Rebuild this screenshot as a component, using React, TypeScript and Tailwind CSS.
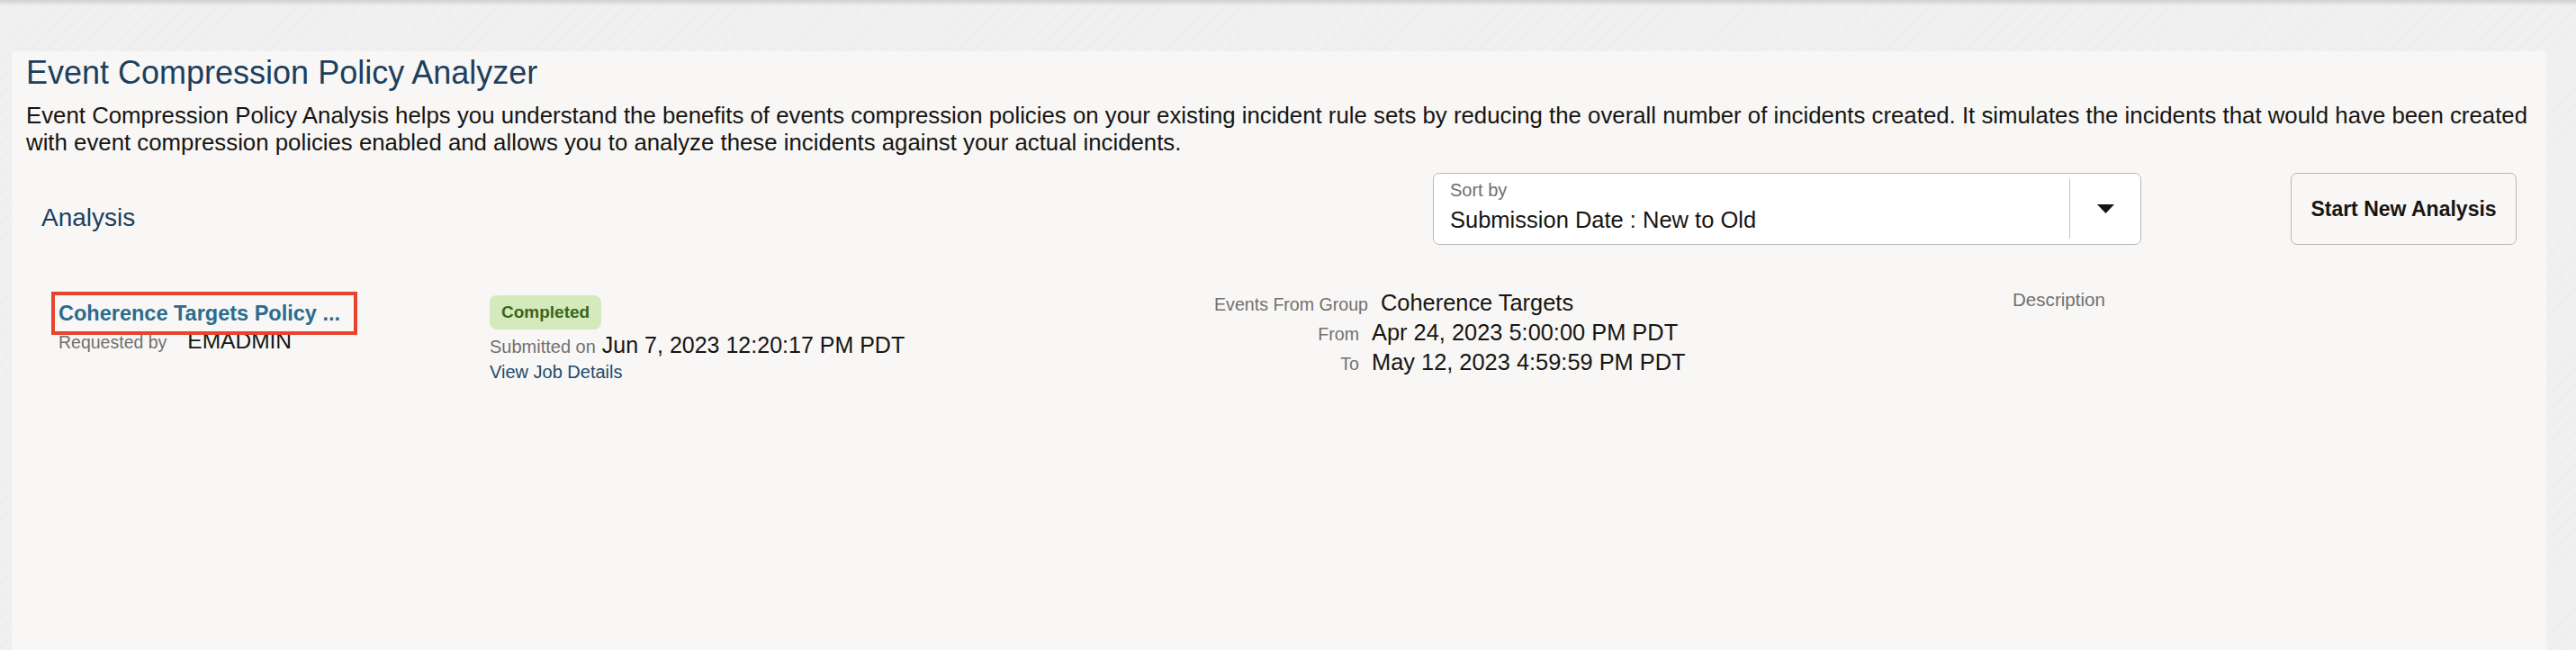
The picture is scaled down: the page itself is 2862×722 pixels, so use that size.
function SortArrow() {
  return (
    <svg width="19" height="10" viewBox="0 0 19 10" aria-hidden="true">
      <polygon points="0,0 19,0 9.5,10" fill="#161513" />
    </svg>
  )
}

function DetailRow({ label, value, labelWidth }: { label: string; value: string; labelWidth: string }) {
  return (
    <div className="flex items-baseline leading-[31px]">
      <span className={`${labelWidth} shrink-0 text-right text-[19.6px] text-[#707070]`}>{label}</span>
      <span className="ml-[14px] text-[25.4px] text-[#161513]">{value}</span>
    </div>
  )
}

export default function App() {
  return (
    <div className="flex min-h-screen flex-col bg-[#efefef] bg-[repeating-linear-gradient(135deg,#f2f2f2_0px,#f2f2f2_2px,#ebebeb_2px,#ebebeb_3px)] font-['Liberation_Sans',Arial,sans-serif]">
      <div className="h-[6px] shrink-0 bg-linear-to-b from-[#d0d0d0] to-[#ededed]" />

      <main className="ml-[13px] mr-[33px] mt-[51px] flex-1 bg-[#f8f7f5] pl-4 pt-1">
        <h1 className="text-[36px] leading-[40px] text-[#1c3f5e]">Event Compression Policy Analyzer</h1>
        <p className="mt-3 text-[25.8px] leading-[30px] text-[#161513]">
          Event Compression Policy Analysis helps you understand the benefits of events compression policies on your
          existing incident rule sets by reducing the overall number of incidents created. It simulates the incidents
          that would have been created with event compression policies enabled and allows you to analyze these
          incidents against your actual incidents.
        </p>

        {/* toolbar */}
        <div className="mt-[19px] flex items-start pr-[33px]">
          <h2 className="ml-[17px] mt-[34px] text-[28px] leading-[32px] text-[#1c3f5e]">Analysis</h2>
          <div className="flex-1" />
          <div className="flex h-[80px] w-[787px] rounded-[7px] border border-[#b8b8b8] bg-white">
            <div className="flex-1 pl-[18px] pt-[6px]">
              <div className="text-[20px] leading-[24px] text-[#6f6f6f]">Sort by</div>
              <div className="mt-[6px] text-[25.5px] leading-[30px] text-[#161513]">Submission Date : New to Old</div>
            </div>
            <div className="my-[6px] w-px bg-[#c4c4c4]" />
            <div className="flex w-[78px] items-center justify-center">
              <SortArrow />
            </div>
          </div>
          <button className="ml-[166px] h-[80px] w-[251px] rounded-[7px] border border-[#b8b8b8] bg-[#f8f7f5] text-[23px] font-bold text-[#161513]">
            Start New Analysis
          </button>
        </div>

        {/* analysis row */}
        <div className="mt-[49px] flex items-start pl-[36px]">
          <div className="relative mt-[13px] w-[479px] shrink-0">
            <a className="block text-[23.5px] font-bold leading-[28px] text-[#2b6b8f]">Coherence Targets Policy ...</a>
            <div className="mt-[2px] flex items-baseline leading-[30px]">
              <span className="text-[19.5px] text-[#707070]">Requested by</span>
              <span className="ml-[23px] text-[24.5px] text-[#161513]">EMADMIN</span>
            </div>
            <div className="pointer-events-none absolute left-[-8px] top-[-10px] h-[48px] w-[340px] border-4 border-[#e8432c]" />
          </div>

          <div className="mt-[7px] w-[560px] shrink-0">
            <div className="flex">
              <span className="flex h-[38px] items-center rounded-[8px] bg-[#d4eabc] px-[13px] text-[19px] font-bold text-[#3b641c]">
                Completed
              </span>
            </div>
            <div className="mt-[2px] flex items-baseline gap-[7px] leading-[30px]">
              <span className="text-[20px] text-[#707070]">Submitted on</span>
              <span className="text-[25px] text-[#161513]">Jun 7, 2023 12:20:17 PM PDT</span>
            </div>
            <a className="mt-px block text-[20px] leading-[24px] text-[#1d4a6c]">View Job Details</a>
          </div>

          <div className="w-[1132px] shrink-0">
            <DetailRow label="Events From Group" value="Coherence Targets" labelWidth="w-[416px]" />
            <DetailRow label="From" value="Apr 24, 2023 5:00:00 PM PDT" labelWidth="w-[406px]" />
            <DetailRow label="To" value="May 12, 2023 4:59:59 PM PDT" labelWidth="w-[406px]" />
          </div>

          <div className="text-[20.6px] leading-[24px] text-[#707070]">Description</div>
        </div>
      </main>
    </div>
  )
}
